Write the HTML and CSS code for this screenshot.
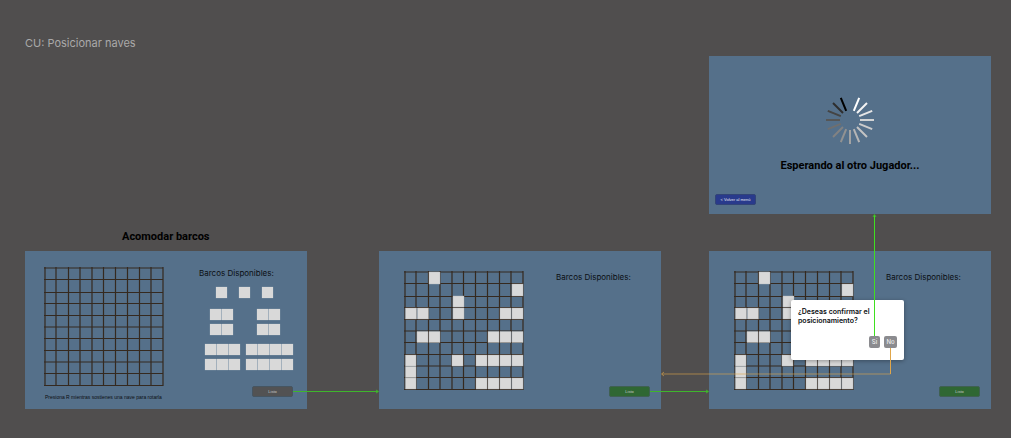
FILE: index.html
```html
<!DOCTYPE html>
<html lang="es">
<head>
<meta charset="utf-8">
<title>CU: Posicionar naves</title>
<link rel="stylesheet" href="styles.css">
</head>
<body>
<svg class="defs" aria-hidden="true">
  <symbol id="grid" viewBox="0 0 120 120">
    <path d="M1 0V119M12 0V119M24.5 0V119M36 0V119M48 0V119M59.5 0V119M71.5 0V119M83.5 0V119M95.5 0V119M107 0V119M119 0V119M0 1H119M0 12.5H119M0 25.5H119M0 36.5H119M0 48.5H119M0 60H119M0 71.5H119M0 83.5H119M0 95H119M0 106.5H119M0 118.5H119"/>
  </symbol>
  <symbol id="fleet" viewBox="0 0 120 120">
    <path d="M25 1h11v12H25zM108 13h11v12h-11zM49 25h11v11H49zM49 37h11v11H49zM1.5 37h11v11h-11zM13.500 37h11v11h-11zM96 37h11v11H96zM108 37h11v11h-11zM13 60.500h11v11H13zM25 60.500h11v11H25zM84 60.500h11v11H84zM96 60.500h11v11H96zM108 60.500h11v11h-11zM1.500 84h10.500v11H1.500zM1.500 95.500h10.500v11H1.500zM1.500 107h10.500v11H1.500zM48 84h11v11H48zM72 84h11v11H72zM84 84h11v11H84zM96 84h11v11H96zM108 84h11v11h-11zM72 107h11v11H72zM84 107h11v11H84zM96 107h11v11H96zM108 107h11v11h-11z"/>
  </symbol>
</svg>
<main class="canvas">
  <h1 class="section-title">CU: Posicionar naves</h1>
  <h2 class="flow-title">Acomodar barcos</h2>

  <section class="frame frame-waiting">
    <svg class="spinner" viewBox="-25 -25 50 50" role="img" aria-label="Cargando">
      <path stroke="#ffffff" d="M3.800-9.200 9.200-22.200"/>
      <path stroke="#f4f4f4" d="M7-7 17-17"/>
      <path stroke="#e6e6e6" d="M9.200-3.800 22.200-9.200"/>
      <path stroke="#d2d4d5" d="M10 0H24"/>
      <path stroke="#cccccc" d="M9.200 3.800 22.200 9.200"/>
      <path stroke="#c4c4c4" d="M7 7 17 17"/>
      <path stroke="#b5b5b5" d="M3.800 9.200 9.200 22.200"/>
      <path stroke="#a3a3a3" d="M0 10V24"/>
      <path stroke="#929292" d="M-3.800 9.200-9.200 22.200"/>
      <path stroke="#828282" d="M-7 7-17 17"/>
      <path stroke="#6f6f6f" d="M-9.200 3.800-22.200 9.200"/>
      <path stroke="#565656" d="M-10 0H-24"/>
      <path stroke="#444444" d="M-9.200-3.800-22.200-9.200"/>
      <path stroke="#2e2e2e" d="M-7-7-17-17"/>
      <path stroke="#000000" d="M-3.800-9.200-9.200-22.200"/>
    </svg>
    <h3 class="waiting-text">Esperando al otro Jugador...</h3>
    <button class="btn btn-back" type="button">&lt; Volver al menú</button>
  </section>

  <section class="frame frame-empty">
    <div class="board-area">
      <svg class="board" viewBox="0 0 120 120" role="img" aria-label="Tablero vacío"><use href="#grid"/></svg>
      <p class="hint">Presiona R mientras sostienes una nave para rotarla</p>
    </div>
    <div class="side">
      <h3 class="side-title">Barcos Disponibles:</h3>
      <div class="ships singles">
        <span class="ship"><i></i></span><span class="ship"><i></i></span><span class="ship"><i></i></span>
      </div>
      <div class="ships doubles">
        <span class="ship"><i></i><i></i></span><span class="ship"><i></i><i></i></span>
        <span class="ship"><i></i><i></i></span><span class="ship"><i></i><i></i></span>
      </div>
      <div class="ships longs">
        <span class="ship"><i></i><i></i><i></i></span><span class="ship"><i></i><i></i><i></i><i></i></span>
        <span class="ship"><i></i><i></i><i></i></span><span class="ship"><i></i><i></i><i></i><i></i></span>
      </div>
      <button class="btn btn-pending" type="button">Listo</button>
    </div>
  </section>

  <section class="frame frame-placed">
    <div class="board-area">
      <svg class="board" viewBox="0 0 120 120" role="img" aria-label="Tablero con naves"><use href="#grid"/><use class="fleet" href="#fleet"/></svg>
    </div>
    <div class="side">
      <h3 class="side-title">Barcos Disponibles:</h3>
      <button class="btn btn-ready" type="button">Listo</button>
    </div>
  </section>

  <section class="frame frame-placed frame-confirm">
    <div class="board-area">
      <svg class="board" viewBox="0 0 120 120" role="img" aria-label="Tablero con naves"><use href="#grid"/><use class="fleet" href="#fleet"/></svg>
    </div>
    <div class="side">
      <h3 class="side-title">Barcos Disponibles:</h3>
      <button class="btn btn-ready" type="button">Listo</button>
    </div>
    <div class="dialog" role="dialog" aria-labelledby="ask">
      <p class="dialog-title" id="ask">¿Deseas confirmar el posicionamiento?</p>
      <div class="dialog-actions">
        <button class="choice" type="button">Sí</button>
        <button class="choice choice-no" type="button">No</button>
      </div>
    </div>
  </section>

  <svg class="links" width="1011" height="438" viewBox="0 0 1011 438" aria-hidden="true">
    <path class="go" d="M293 391.500H378M376 390l2.500 1.500-2.500 1.500"/>
    <path class="go" d="M650 391.500H708M706 390l2.500 1.500-2.500 1.500"/>
    <path class="yes" d="M874.500 336V215"/>
    <path class="go" d="M873 217l1.500-2.500 1.500 2.500"/>
    <path class="no" d="M890.500 348V374"/>
    <path class="no faint" d="M890.500 374H662M664 372l-2.500 2 2.500 2"/>
  </svg>
</main>
</body>
</html>
```
FILE: styles.css
```css
* { box-sizing: border-box; }

body {
  margin: 0;
  background: #504e4e;
  color: #0b0f13;
  font-family: Inter, "Liberation Sans", sans-serif;
}

h1, h2, h3, p { margin: 0; }

.defs { position: absolute; width: 0; height: 0; }

.canvas {
  position: relative;
  min-height: 100vh;
  overflow: hidden;
}

.section-title {
  position: absolute;
  left: 25px;
  top: 36px;
  color: #aaa9a9;
  font-size: 11px;
  font-weight: 400;
  line-height: 14px;
}

.flow-title,
.waiting-text {
  color: #000;
  font-family: Roboto, Inter, sans-serif;
  font-size: 11px;
  font-weight: 700;
  line-height: 14px;
}

.flow-title {
  position: absolute;
  left: 122px;
  top: 230px;
}

.frame {
  position: absolute;
  display: flex;
  width: 282px;
  height: 158px;
  background: #55708a;
}

.frame-waiting {
  left: 709px;
  top: 56px;
  flex-direction: column;
  align-items: center;
  padding: 39px 6px 9px;
}

.frame-empty { left: 25px; top: 251px; padding: 16px 14px 12px 19px; }
.frame-placed { left: 379px; top: 251px; padding: 20px 11px 12px 25px; }
.frame-confirm { left: 709px; }

.spinner {
  width: 50px;
  height: 50px;
  fill: none;
  stroke-width: 2;
}

.waiting-text { margin-top: 14px; }

.btn {
  width: 41px;
  height: 11px;
  margin: auto 0 0;
  padding: 0;
  border: 1px solid #465561;
  border-radius: 2px;
  color: #c8ccc8;
  font-family: "Liberation Sans", sans-serif;
  font-size: 4px;
  line-height: 9px;
  text-align: center;
}

.btn-back {
  align-self: flex-start;
  background: #293a8c;
  border-color: #324477;
  color: #e4e7f2;
}

.btn-pending { align-self: flex-end; background: #525253; }
.btn-ready { align-self: flex-end; background: #2f6733; border-color: #3f6052; }

.board-area { width: 120px; flex: none; }

.board {
  display: block;
  width: 120px;
  height: 120px;
  fill: none;
  stroke: #35291f;
  stroke-width: 1.2;
}

.fleet { fill: #d9d9d9; stroke: #b4b8bb; stroke-width: 0.4; }

.hint {
  margin-top: 7px;
  padding-left: 1px;
  font-family: "Liberation Sans", sans-serif;
  font-size: 5px;
  line-height: 6px;
  white-space: nowrap;
}

.side {
  display: flex;
  flex: 1;
  flex-direction: column;
}

.side-title {
  padding-left: 35px;
  font-size: 8px;
  font-weight: 400;
  line-height: 12px;
}

.frame-placed .side-title { padding-left: 32px; }

.ships { display: grid; justify-content: start; }
.ship { display: flex; gap: 1px; background: #a3b0bc; }
.ship i { width: 11px; height: 11px; background: #d9d9d9; box-shadow: 0 0 1px #a3b0bc; }

.singles { grid-template-columns: repeat(3, auto); gap: 12px; margin: 8px 0 0 52px; }
.doubles { grid-template-columns: repeat(2, auto); gap: 4px 24px; margin: 11px 0 0 46px; }
.longs { grid-template-columns: repeat(2, auto); gap: 4px 6px; margin: 9px 0 0 41px; }

.dialog {
  position: absolute;
  left: 82px;
  top: 49px;
  display: flex;
  flex-direction: column;
  width: 113px;
  height: 60px;
  padding: 7px 7px 12px;
  border-radius: 2px;
  background: #fff;
  box-shadow: 0 1px 4px #0005;
}

.dialog-title {
  font-size: 7px;
  font-weight: 600;
  line-height: 9px;
}

.dialog-actions {
  display: flex;
  justify-content: flex-end;
  gap: 4px;
  margin-top: auto;
}

.choice {
  width: 11px;
  height: 12px;
  padding: 0;
  border: 0;
  border-radius: 2px;
  background: #8b8b8f;
  color: #eee;
  font-family: inherit;
  font-size: 6px;
  font-weight: 500;
  line-height: 12px;
}

.choice-no { width: 13px; }

.links {
  position: absolute;
  left: 0;
  top: 0;
  fill: none;
  pointer-events: none;
}

.go { stroke: #3fb52c; }
.yes { stroke: #3fe01f; }
.no { stroke: #e0a64a; }
.faint { opacity: 0.6; }
```
